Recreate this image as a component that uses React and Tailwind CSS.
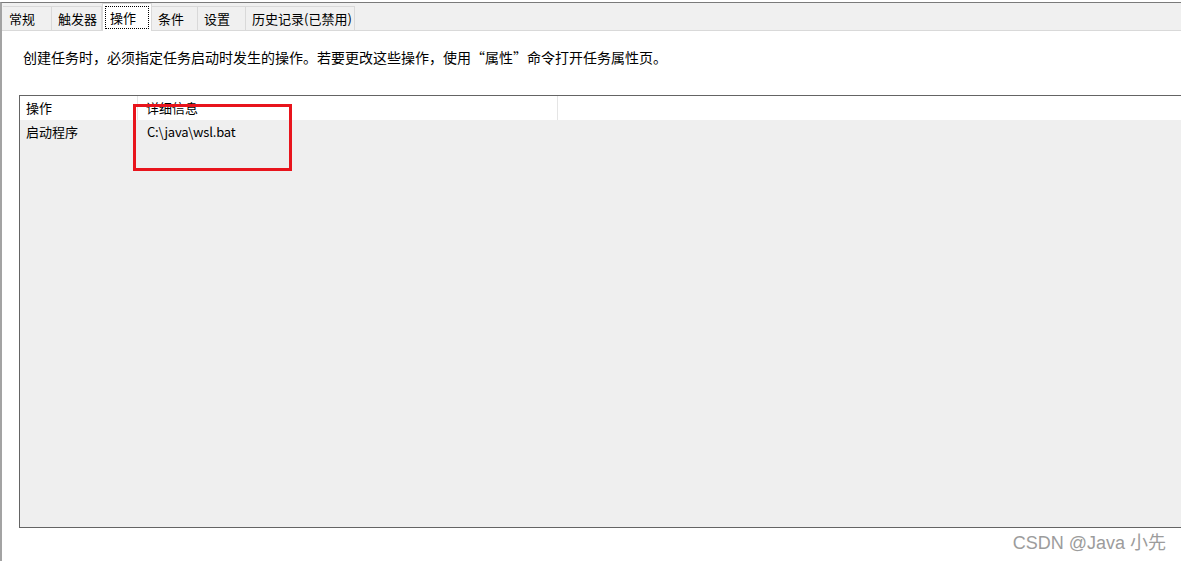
import React from 'react';

const tabs = [
  { label: '常规', w: 'w-[49px]' },
  { label: '触发器', w: 'w-[50px]' },
  { label: '操作', w: 'w-[50px]', active: true },
  { label: '条件', w: 'w-[46px]' },
  { label: '设置', w: 'w-[48px]' },
  { label: '历史记录(已禁用)', w: 'w-[109px]' },
];

export default function App() {
  return (
    <div
      className="relative h-[561px] w-full overflow-hidden bg-white pt-[2px] text-black"
      style={{ fontFamily: '"Noto Sans CJK SC", "Noto Sans", sans-serif' }}
    >
      <div className="flex h-full flex-col border-l-2 border-t border-l-[#a3a3a3] border-t-[#7a7a7a]">
        {/* Tab strip */}
        <div className="flex h-[28px] items-end border-b border-[#d9d9d9] bg-[#f0f0f0] pl-[1px]">
          {tabs.map((t) =>
            t.active ? (
              <div
                key={t.label}
                className={`relative z-10 -mb-px flex h-[28px] ${t.w} shrink-0 items-start border border-b-0 border-[#d9d9d9] bg-white px-[2px] pt-[2px]`}
              >
                <div className="flex h-[23px] w-full items-center border border-dotted border-black pl-[4px] text-[13px] leading-none">
                  {t.label}
                </div>
              </div>
            ) : (
              <div
                key={t.label}
                className={`flex h-[24px] ${t.w} shrink-0 items-center border-r border-t border-[#d9d9d9] pl-[6px] text-[13px] leading-none`}
              >
                {t.label}
              </div>
            )
          )}
        </div>

        {/* Page body */}
        <div className="flex flex-1 flex-col bg-white">
          <p className="ml-[21px] mt-[16px] h-[20px] text-[14px] leading-[20px] tracking-[0px] whitespace-nowrap">
            创建任务时，必须指定任务启动时发生的操作。若要更改这些操作，使用“属性”命令打开任务属性页。
          </p>

          {/* Action list */}
          <div className="ml-[17px] mt-[28px] flex h-[433px] w-[1180px] flex-col border border-[#646464]">
            <div className="flex h-[24px] shrink-0 bg-white text-[13px]">
              <div className="flex w-[118px] items-center border-r border-[#e5e5e5] pl-[6px]">操作</div>
              <div className="flex w-[420px] items-center border-r border-[#e5e5e5] pl-[8px]">详细信息</div>
              <div className="flex-1" />
            </div>
            <div className="flex-1 bg-[#efefef]">
              <div className="flex h-[24px] items-center text-[13px]">
                <div className="w-[119px] pl-[6px]">启动程序</div>
                <div className="pl-[8px] tracking-[-0.2px]">C:\java\wsl.bat</div>
              </div>
            </div>
          </div>
        </div>
      </div>

      {/* Red annotation box */}
      <div className="pointer-events-none absolute left-[133px] top-[104px] h-[67px] w-[159px] border-[3px] border-[#e8141c]" />

      {/* Watermark */}
      <div
        className="absolute right-[15px] top-[530px] text-[18px] leading-[26px] text-[#9c9c9c]"
        style={{ fontFamily: '"Liberation Sans", "Noto Sans CJK SC", sans-serif' }}
      >
        CSDN @Java 小先
      </div>
    </div>
  );
}
